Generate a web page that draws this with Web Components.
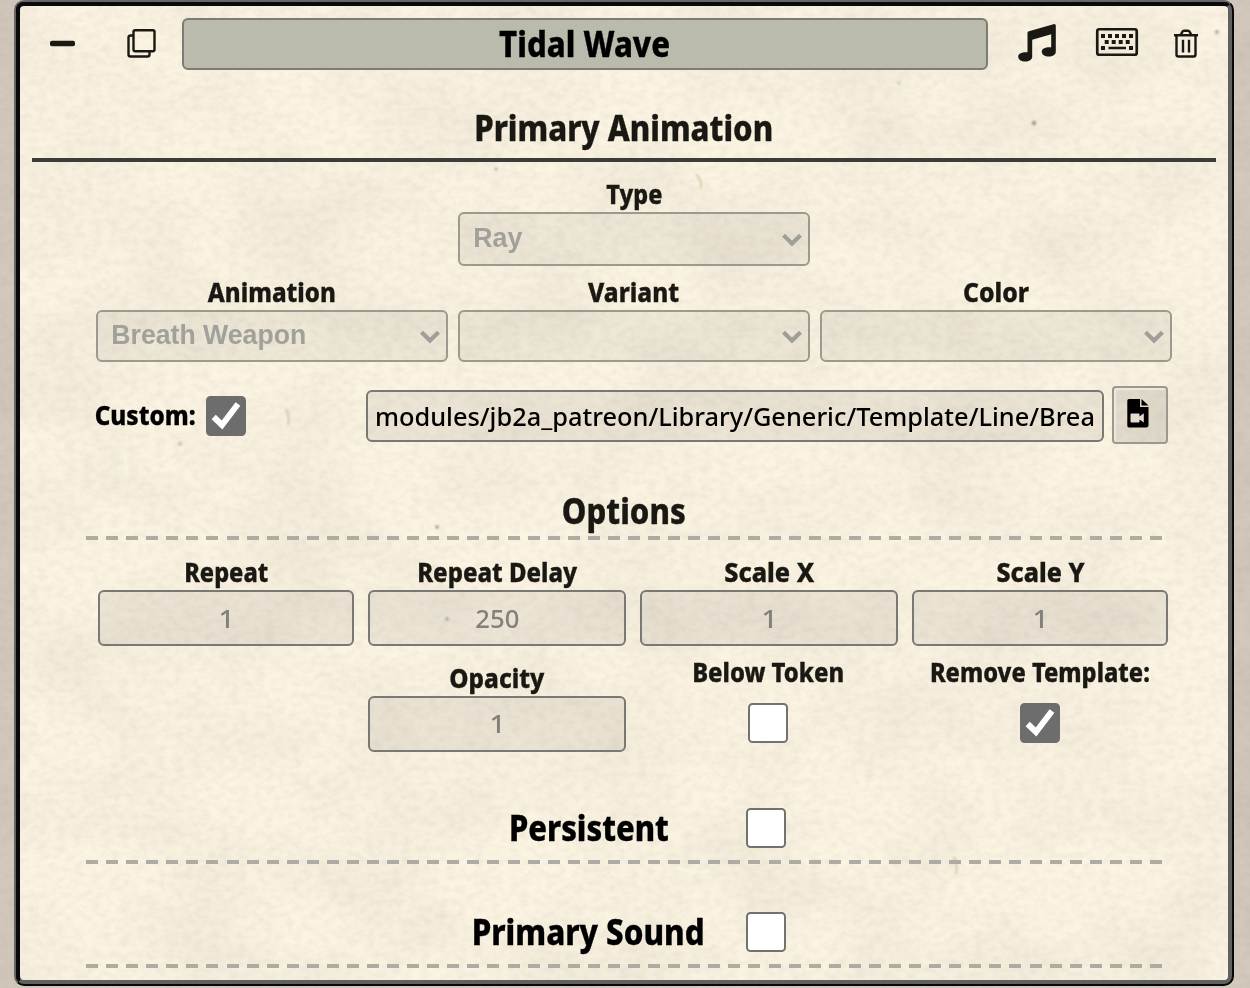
<!DOCTYPE html>
<html lang="en">
<head>
<meta charset="utf-8">
<title>Tidal Wave</title>
<style>
html,body{margin:0;height:100%;overflow:hidden}
body{background:#d3cabd;font-family:"Noto Sans","Open Sans",sans-serif;color:#191813}
</style>
</head>
<body>
<animation-app></animation-app>
<script>
const define = (name, html, setup) => customElements.define(name, class extends HTMLElement {
  connectedCallback() {
    if (this.shadowRoot) return;
    const t = document.createElement('template');
    t.innerHTML = html;
    this.attachShadow({mode: 'open'}).append(t.content.cloneNode(true));
    if (setup) setup(this, this.shadowRoot);
  }
});

// Mottled parchment surface
define('paper-texture', `<style>
:host{position:absolute;inset:0;display:block;overflow:hidden;z-index:-1}
svg{display:block;width:100%;height:100%}
.fibres{display:none}:host([fibres]) .fibres{display:inline}
</style>
<svg>
<filter id="fine" x="0" y="0" width="100%" height="100%" color-interpolation-filters="sRGB"><feTurbulence type="fractalNoise" baseFrequency=".11 .15" numOctaves="3" seed="8"/><feColorMatrix values="0 0 0 0 .5  0 0 0 0 .46  0 0 0 0 .38  .15 0 0 0 -.053"/></filter>
<filter id="large" x="0" y="0" width="100%" height="100%" color-interpolation-filters="sRGB"><feTurbulence type="fractalNoise" baseFrequency=".009 .012" numOctaves="4" seed="21"/><feColorMatrix values="0 0 0 0 .55  0 0 0 0 .52  0 0 0 0 .47  .17 0 0 0 -.06"/></filter>
<filter id="soft"><feGaussianBlur stdDeviation=".8"/></filter>
<rect width="100%" height="100%" filter="url(#large)"/><rect width="100%" height="100%" filter="url(#fine)"/>
<g class="fibres" filter="url(#soft)" fill="none" stroke-width="2">
<path d="M676 168Q682 174 681 182M266 403Q270 411 268 419M934 851Q938 859 936 868" stroke="#b9b487" opacity=".6"/>
<path d="M612 245 624 260M104 447Q108 458 106 470M1128 450 1132 466M656 862Q675 869 690 864" stroke="#f8f8e9"/>
<g fill="#9a9588" stroke="none"><circle cx="1014" cy="117" r="2.200"/><circle cx="1197" cy="26" r="1.800"/><circle cx="417" cy="521" r="1.800"/><circle cx="476" cy="163" r="1.300"/><circle cx="160" cy="438" r="1.800" opacity=".6"/><circle cx="427" cy="613" r="2" fill="#a9b9b1"/><circle cx="879" cy="77" r="2" fill="#c8cec4"/></g>
</g>
</svg>`);

// Label squeezed to a condensed measure
define('fit-text', `<style>
:host{display:inline-flex;justify-content:center;align-items:center;white-space:pre;flex:none;font-size:27px;font-weight:800;height:37px;line-height:37px;-webkit-text-stroke:.35px currentColor}
:host([big]){font-size:35.5px;height:50px;line-height:50px;padding-bottom:2px}
:host([light]){font-size:26px;font-weight:500;-webkit-text-stroke:0}
:host([arial]){font-family:"Liberation Sans",Arial,sans-serif;font-weight:700;-webkit-text-stroke:0;margin-left:-1px}
span{flex:none;display:block}
</style><span><slot></slot></span>`, (el, root) => {
  const s = root.querySelector('span'), w = +el.getAttribute('w');
  el.style.width = w + 'px';
  s.style.transform = `scaleX(${w / s.getBoundingClientRect().width})`;
});

define('ui-icon', `<style>:host{display:block;flex:none}svg{display:block;overflow:visible}</style><div></div>`, (el, root) => {
  root.querySelector('div').innerHTML = {
    minus: '<svg width="25" height="6"><rect width="25" height="5.400" y="-.2" rx="2" fill="#191813"/></svg>',
    copy: '<svg width="28" height="29" fill="none" stroke="#191813" stroke-width="2.400"><rect x="5.500" y=".2" width="21" height="21" rx="1.600"/><path d="M5.500 5.500H2.500Q.5 5.500 .5 7.500V24.500Q.5 26.500 2.500 26.500H19.500Q21.500 26.500 21.500 24.500V21.500"/></svg>',
    music: '<svg width="38" height="38" fill="#191813"><path d="M9.500 9Q9.500 7.700 10.800 7.300L35.500.2Q37.800-.3 37.800 1.700V27.500C37.800 30.700 34.700 32.500 30.800 32.500S23.800 30.900 23.800 27.800 27.200 23 33.200 23.300V10.200L14.200 15.700V32.500C14.200 35.700 11 37.500 7.200 37.500S.2 35.900.2 32.800 3.500 28 9.500 28.300Z"/></svg>',
    keyboard: '<svg width="42" height="28"><rect x="1.250" y="1.250" width="39.500" height="25.500" rx="2" fill="none" stroke="#191813" stroke-width="2.700"/><path fill="#191813" d="M5 6h4v4H5zm7 0h4v4h-4zm7 0h4v4h-4zm7 0h4v4h-4zm7 0h4v4h-4zM8.700 12h4v4h-4zm7 0h4v4h-4zm7 0h4v4h-4zm7 0h4v4h-4zM5 18h4v4H5zm28 0h4v4h-4zM12.500 18.800h17.500v2.400H12.500z"/></svg>',
    trash: '<svg width="24" height="28" fill="none" stroke="#191813" stroke-width="2.400"><path d="M0 5.200H24" stroke-width="2.500"/><path d="M6.500 5.200 8.500 1.700Q9 .8 10 .8H14Q15 .8 15.500 1.700L17.500 5.200M2.500 5.500V24.500Q2.500 26.500 4.500 26.500H19.500Q21.500 26.500 21.500 24.500V5.500M9 9.800V22.500M15 9.800V22.500"/></svg>',
    video: '<svg width="22" height="29"><path fill="#000" d="M2 0H13V8H21.500V26Q21.500 28.500 19 28.500H2Q.3 28.500.3 26.500V2Q.3 0 2 0Z"/><path fill="#000" d="M14.500 0 21.500 6.500H14.500Z"/><path fill="#e3dccf" d="M4.500 14.500H11.500Q12.500 14.500 12.500 15.500V17.500L16.800 14.200V23.500L12.500 20.500V22.500Q12.500 23.500 11.500 23.500H4.500Q3.500 23.500 3.500 22.500V15.500Q3.500 14.500 4.500 14.500Z"/></svg>',
    chevron: '<svg width="20" height="14" fill="none" stroke="#a09e98" stroke-width="4.200"><path d="M1.500 3.300 10 11.500 18.500 3.300"/></svg>'
  }[el.getAttribute('name')];
});

define('check-box', `<style>
:host{display:block;flex:none;box-sizing:border-box;width:40px;height:40px;border:2px solid #727272;border-radius:4.500px;background:#fff}
:host([checked]){background:#6d6d6d;border-color:#6d6d6d}
svg{display:none}:host([checked]) svg{display:block}
</style><svg width="36" height="36"><path d="M5.700 19 14 27 30 6" fill="none" stroke="#fff" stroke-width="6"/></svg>`);

define('field-box', `<style>
:host{display:flex;box-sizing:border-box;align-items:center;justify-content:center;height:56px;border:2px solid #797872;border-radius:6px;background:rgba(110,100,95,.1);color:#82807a}
</style><slot></slot>`);

define('select-box', `<style>
:host{display:flex;box-sizing:border-box;align-items:center;justify-content:space-between;height:52px;border:2px solid #9b9990;border-radius:6px;background:rgba(110,100,95,.085);color:#a2a09a;padding:0 6px 1px 14px}
ui-icon{margin-left:auto}
</style><slot></slot><ui-icon name="chevron"></ui-icon>`);

define('labelled-field', `<style>:host{display:flex;flex-direction:column}.l{display:flex;justify-content:center;height:37px}</style>
<div class="l"><slot name="label"></slot></div><slot></slot>`);

define('dashed-rule', `<style>:host{display:block;width:1076px;height:4px;margin-left:66px;background:repeating-linear-gradient(90deg,#aeaba4 0 12px,transparent 12px 20.075px)}</style>`);

define('panel-header', `<style>
:host{display:grid;grid-template-columns:162px 806px 240px;height:52px;align-items:center}
.side{display:flex;align-items:center;height:52px}
.title{box-sizing:border-box;height:52px;border:2px solid #7c7c74;border-radius:6px;background:#babbad;color:#000;display:flex;justify-content:center;align-items:center}
.left{padding-left:29.500px;gap:53px}.right{padding-left:30px;gap:40px}
.right ui-icon:last-child{margin-left:-4px}
</style>
<div class="side left"><ui-icon name="minus"></ui-icon><ui-icon name="copy"></ui-icon></div>
<div class="title"><fit-text big w="171"><slot></slot></fit-text></div>
<div class="side right"><ui-icon name="music" style="margin-top:-3px"></ui-icon><ui-icon name="keyboard" style="margin-top:-4px"></ui-icon><ui-icon name="trash"></ui-icon></div>`);

define('custom-row', `<style>
:host{display:grid;grid-template-columns:110px 160px 738px 56px;height:58px;align-items:center;padding-left:76px;color:#000}
field-box{height:52px;color:#000}
.button{box-sizing:border-box;margin-left:8px;width:56px;height:58px;border:2px solid #9b998f;border-radius:4px;background:rgba(120,110,100,.18);box-shadow:inset 2px 2px #eee8da;display:flex;justify-content:center;align-items:center;padding:0 5px 4px 0}
</style>
<fit-text w="101" style="margin:-1px 0 0 -1px">Custom:</fit-text><check-box checked style="margin-top:2px"></check-box>
<field-box style="margin-top:2px"><fit-text light w="720">modules/jb2a_patreon/Library/Generic/Template/Line/Brea</fit-text></field-box>
<div class="button"><ui-icon name="video"></ui-icon></div>`);

define('options-grid', `<style>
:host{display:grid;grid-template-columns:256px 258px 258px 256px;gap:13px 14px;padding-left:78px;align-items:start}
.check{display:flex;flex-direction:column;align-items:center;gap:13px;margin-top:-6px}
</style>
<labelled-field><fit-text slot="label" w="84">Repeat</fit-text><field-box><fit-text light w="16">1</fit-text></field-box></labelled-field>
<labelled-field><fit-text slot="label" w="160">Repeat Delay</fit-text><field-box><fit-text light w="44">250</fit-text></field-box></labelled-field>
<labelled-field><fit-text slot="label" w="90">Scale X</fit-text><field-box><fit-text light w="16">1</fit-text></field-box></labelled-field>
<labelled-field><fit-text slot="label" w="88">Scale Y</fit-text><field-box><fit-text light w="16">1</fit-text></field-box></labelled-field>
<div></div>
<labelled-field><fit-text slot="label" w="95">Opacity</fit-text><field-box><fit-text light w="16" style="margin-top:-2px">1</fit-text></field-box></labelled-field>
<div class="check" style="margin-left:-2px"><fit-text w="152">Below Token</fit-text><check-box></check-box></div>
<div class="check"><fit-text w="220">Remove Template:</fit-text><check-box checked></check-box></div>`);

define('toggle-heading', `<style>
:host{display:flex;height:52px;align-items:center;justify-content:flex-end;box-sizing:border-box;width:766px;color:#000}
check-box{margin-left:var(--gap)}
</style><slot></slot><check-box></check-box>`);

define('animation-app', `<style>
:host{display:block;position:relative;z-index:0;height:988px;padding-left:14px;box-sizing:border-box}
.frame{box-sizing:border-box;position:relative;z-index:0;width:1220px;height:986px;border:2px solid;border-color:#666 #080808 #080808 #666;border-radius:10px;background:#080808}
.paper{box-sizing:border-box;position:relative;z-index:0;width:1216px;height:982px;border:4px solid;border-color:#0a0a0c #606060 #606060 #0a0a0c;border-radius:8px;background:#fbf4e3;padding-top:12px;overflow:hidden}
.heading{display:flex;justify-content:center;height:52px}
.rule{height:4px;margin:4px 12px 0;background:#3e3c38}
.selects{display:grid;grid-template-columns:352px 352px 352px;column-gap:10px;padding-left:76px}
</style>
<paper-texture></paper-texture>
<div class="frame"><div class="paper"><paper-texture fibres></paper-texture>
<panel-header>Tidal Wave</panel-header>
<div class="heading" style="margin-top:32px"><fit-text big w="299">Primary Animation</fit-text></div>
<div class="rule"></div>
<div class="selects" style="margin-top:13px"><div></div><labelled-field><fit-text slot="label" w="56">Type</fit-text><select-box style="height:54px"><fit-text arial w="49">Ray</fit-text></select-box></labelled-field></div>
<div class="selects" style="margin-top:7px">
<labelled-field><fit-text slot="label" w="128">Animation</fit-text><select-box><fit-text arial w="195">Breath Weapon</fit-text></select-box></labelled-field>
<labelled-field><fit-text slot="label" w="91">Variant</fit-text><select-box></select-box></labelled-field>
<labelled-field><fit-text slot="label" w="66">Color</fit-text><select-box></select-box></labelled-field></div>
<custom-row style="margin-top:24px"></custom-row>
<div class="heading" style="margin-top:40px"><fit-text big w="124" style="padding-bottom:0;height:52px;line-height:52px">Options</fit-text></div>
<dashed-rule></dashed-rule>
<options-grid style="margin-top:13px"></options-grid>
<toggle-heading style="margin-top:50px;--gap:77px"><fit-text big w="160">Persistent</fit-text></toggle-heading>
<dashed-rule style="margin-top:6px"></dashed-rule>
<toggle-heading style="margin-top:42px;--gap:41px"><fit-text big w="233">Primary Sound</fit-text></toggle-heading>
<dashed-rule style="margin-top:6px"></dashed-rule>
</div></div>`);
</script>
</body>
</html>
